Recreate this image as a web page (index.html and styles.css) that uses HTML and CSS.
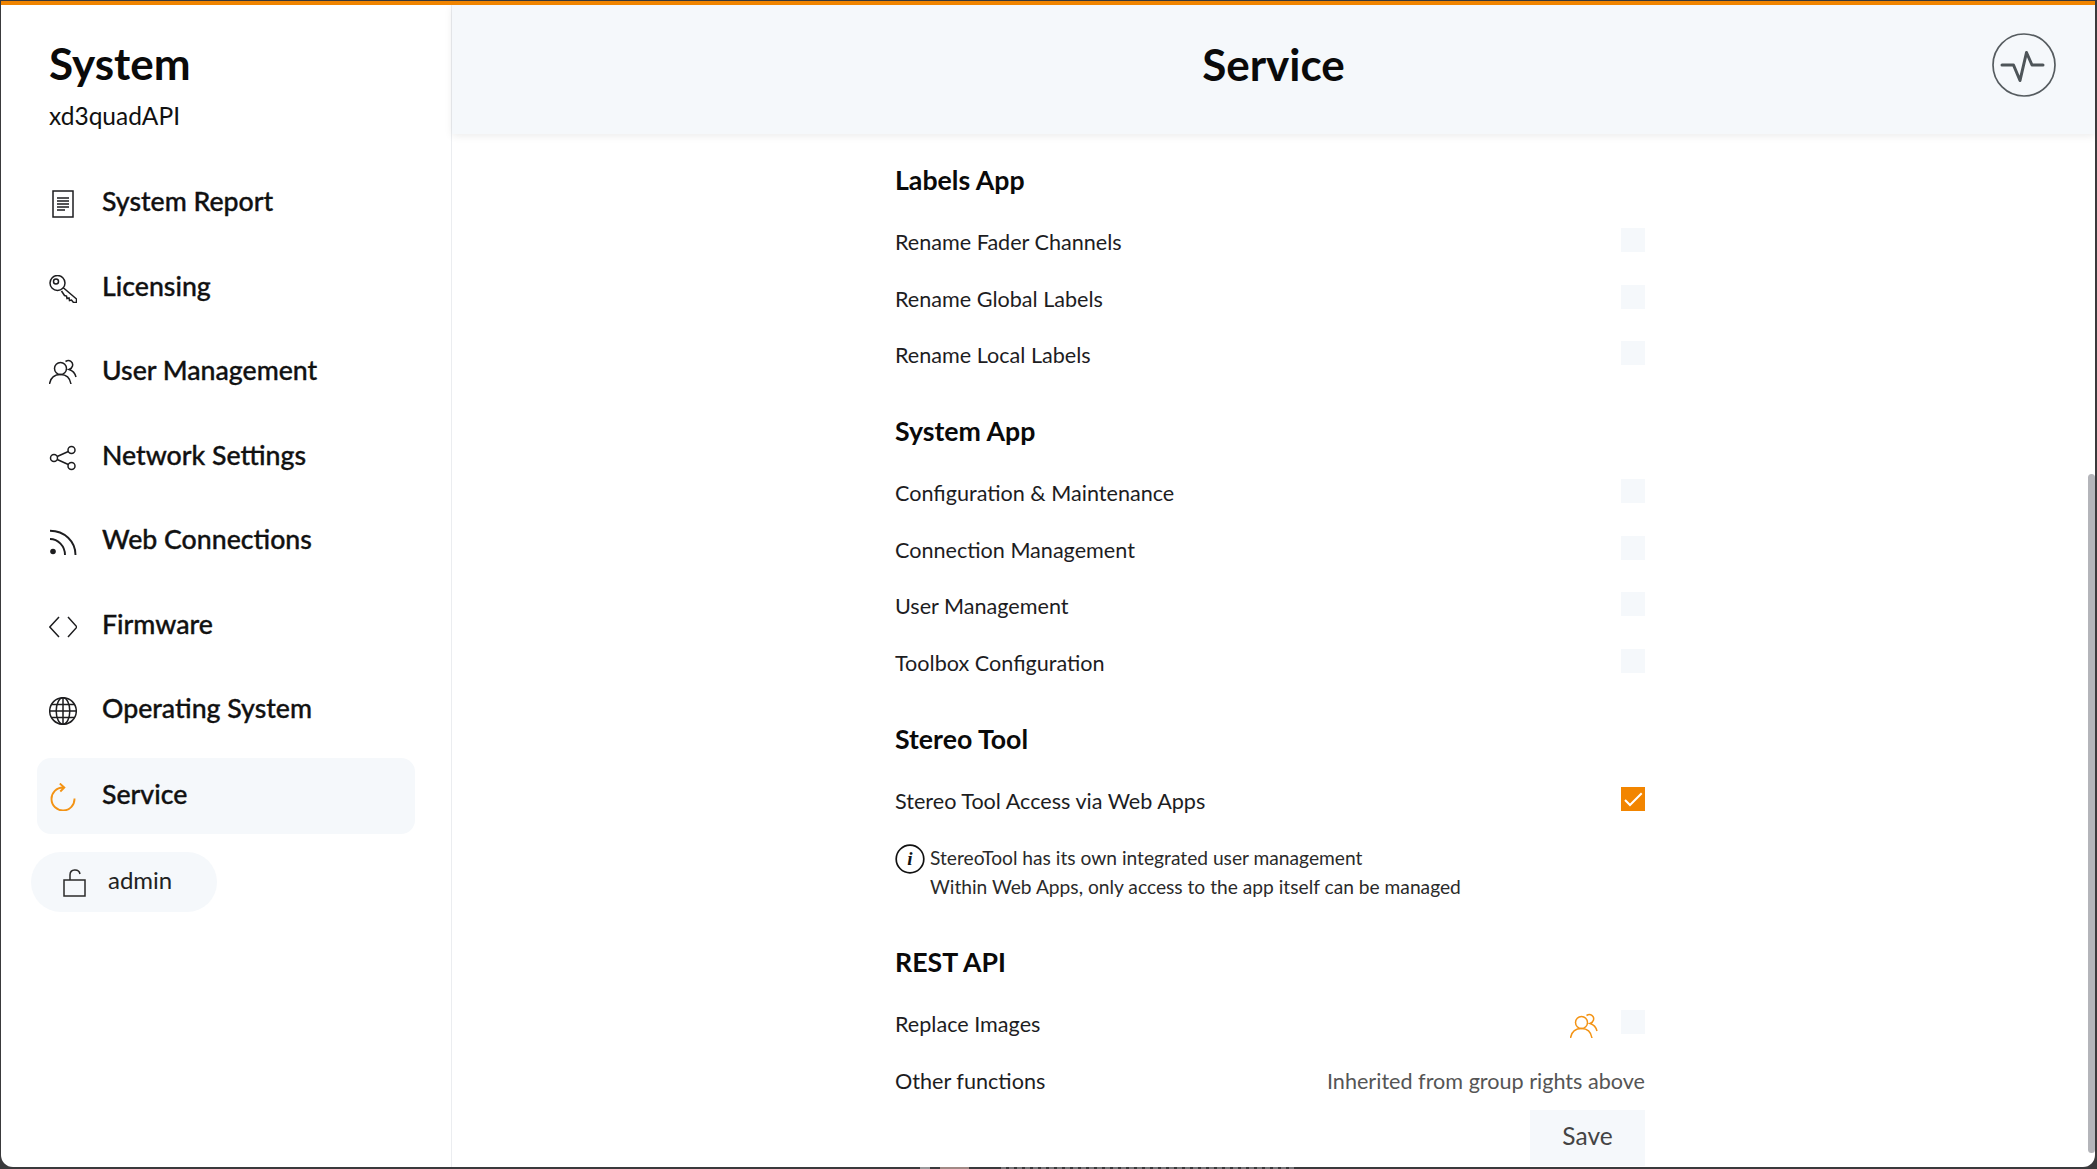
FILE: index.html
```html
<!DOCTYPE html>
<html lang="en">
<head>
<meta charset="utf-8">
<title>Service</title>
<link rel="stylesheet" href="styles.css">
</head>
<body>
<div class="window">
  <aside class="sidebar">
    <div class="brand">
      <h1 class="brand-title">System</h1>
      <div class="brand-sub">xd3quadAPI</div>
    </div>
    <nav class="nav">
      <a class="nav-item">
        <svg class="nav-icon" viewBox="0 0 28 28"><rect x="4" y="1" width="20" height="26" class="st"/><path d="M8 8h12M8 11h12M8 14h12M8 17h12M8 20h8" class="st thin"/></svg>
        <span>System Report</span>
      </a>
      <a class="nav-item">
        <svg class="nav-icon" viewBox="0 0 28 28"><circle cx="8.500" cy="8" r="7.500" class="st"/><circle cx="7" cy="6.500" r="2.500" class="st"/><path d="M14 12.500 27.500 24v3.500h-3l-2-2.500-2 .5-.5-2.500-2 .5-.5-2.500-2-.5-3-4.500" class="st"/></svg>
        <span>Licensing</span>
      </a>
      <a class="nav-item">
        <svg class="nav-icon" viewBox="0 0 28 28"><circle cx="11.500" cy="9.500" r="6" class="st"/><path d="M0.500 25c1-6 5-9.500 11-9.500s9.500 3.500 10.500 9.500M16.500 2.500c4-2.500 8 .5 7 4.500-.5 2-2 3-3.500 3.500 3.500 1 6 3.500 7 7.500" class="st"/></svg>
        <span>User Management</span>
      </a>
      <a class="nav-item">
        <svg class="nav-icon" viewBox="0 0 28 28"><circle cx="5" cy="14" r="3.500" class="st"/><circle cx="22.500" cy="6" r="3.500" class="st"/><circle cx="22.500" cy="22" r="3.500" class="st"/><path d="M8.200 12.500 19.300 7.500M8.200 15.500l11.100 5" class="st"/></svg>
        <span>Network Settings</span>
      </a>
      <a class="nav-item">
        <svg class="nav-icon" viewBox="0 0 28 28"><circle cx="4" cy="23.500" r="2.800" class="fillc"/><path d="M1 11c8 0 15 7 15 16M1 2.700c14.500 0 25.500 10.800 25.500 24.300" class="st wide"/></svg>
        <span>Web Connections</span>
      </a>
      <a class="nav-item">
        <svg class="nav-icon" viewBox="0 0 28 28"><path d="M10 4 .8 14 10 24M19 4l9 10-9 10" class="st"/></svg>
        <span>Firmware</span>
      </a>
      <a class="nav-item">
        <svg class="nav-icon" viewBox="0 0 28 28"><circle cx="14" cy="14" r="13.300" class="st"/><ellipse cx="14" cy="14" rx="6.800" ry="13.300" class="st"/><path d="M14 .7v26.600M2.500 7.500h23M.7 14h26.600M2.500 20.500h23" class="st"/></svg>
        <span>Operating System</span>
      </a>
      <a class="nav-item active">
        <svg class="nav-icon orange" viewBox="0 0 28 28"><path d="M25.500 15.500A11.500 11.500 0 1 1 14 4.500M10.800 .5l4.500 4-4 4" class="st wide"/></svg>
        <span>Service</span>
      </a>
    </nav>
    <button class="user-pill">
      <svg class="lock" viewBox="0 0 24 28"><rect x="1" y="11" width="21" height="16" class="st"/><path d="M7 11V6c0-6.500 9-6.500 10-1" class="st"/></svg>
      <span>admin</span>
    </button>
  </aside>
  <main class="main">
    <header class="header">
      <h2 class="page-title">Service</h2>
      <svg class="pulse" viewBox="0 0 64 64"><circle cx="32" cy="32" r="31" class="ring"/><path d="M10 32h11.500l6.500 15.500L34.500 19.500 40 32h11" class="beat"/></svg>
    </header>
    <div class="scroller">
      <div class="form">
        <h3 class="section first">Labels App</h3>
        <div class="row"><span>Rename Fader Channels</span><i class="check"></i></div>
        <div class="row"><span>Rename Global Labels</span><i class="check"></i></div>
        <div class="row"><span>Rename Local Labels</span><i class="check"></i></div>
        <h3 class="section">System App</h3>
        <div class="row"><span>Configuration &amp; Maintenance</span><i class="check"></i></div>
        <div class="row"><span>Connection Management</span><i class="check"></i></div>
        <div class="row"><span>User Management</span><i class="check"></i></div>
        <div class="row"><span>Toolbox Configuration</span><i class="check"></i></div>
        <h3 class="section">Stereo Tool</h3>
        <div class="row"><span>Stereo Tool Access via Web Apps</span>
          <i class="check on"><svg viewBox="0 0 24 24"><path d="M4 13 9 18 20.700 6.300"/></svg></i></div>
        <div class="note">
          <svg class="info" viewBox="0 0 30 30"><circle cx="15" cy="15" r="13.800"/></svg>
          <em class="info-i">i</em>
          <p>StereoTool has its own integrated user management<br>Within Web Apps, only access to the app itself can be managed</p>
        </div>
        <h3 class="section rest">REST API</h3>
        <div class="row"><span>Replace Images</span>
          <span class="row-end">
            <svg class="nav-icon orange small" viewBox="0 0 28 28"><circle cx="11.500" cy="9.500" r="6" class="st"/><path d="M0.500 25c1-6 5-9.500 11-9.500s9.500 3.500 10.500 9.500M16.500 2.500c4-2.500 8 .5 7 4.500-.5 2-2 3-3.500 3.500 3.500 1 6 3.500 7 7.500" class="st"/></svg>
            <i class="check"></i>
          </span></div>
        <div class="row"><span>Other functions</span><span class="muted">Inherited from group rights above</span></div>
        <div class="actions"><button class="save">Save</button></div>
      </div>
    </div>
    <div class="scrollbar"></div>
  </main>
</div>
<div class="peek peek-gray"></div>
<div class="peek peek-photo"></div>
<div class="peek peek-text"></div>
</body>
</html>
```

FILE: styles.css
```css
* { box-sizing: border-box; }
html, body { margin: 0; height: 100%; overflow: hidden; }
body {
  background: #3a3a3c;
  font-family: Lato, "Liberation Sans", sans-serif;
  color: #111;
  padding: 1px 2px 2px 1px;
  position: relative;
}
.window {
  height: 1166px;
  display: flex;
  background: #fff;
  border-top: 4px solid #f08400;
  border-radius: 0 0 12px 12px;
  overflow: hidden;
}
.sidebar {
  width: 451px;
  flex: none;
  border-right: 1px solid #ebedf0;
  padding: 0 36px 0 30px;
}
.brand { padding: 33px 0 0 18px; }
.brand-title { margin: 0; font-size: 44px; line-height: 50px; font-weight: 700; color: #0a0a0a; }
.brand-sub { margin-top: 13px; font-size: 24.500px; line-height: 30px; color: #111; }
.nav { margin-top: 30px; margin-left: 6px; display: flex; flex-direction: column; }
.nav-item {
  height: 84.500px;
  display: flex;
  align-items: center;
  gap: 25px;
  padding-left: 12px;
  font-size: 26.700px;
  font-weight: 500;
  color: #111;
  -webkit-text-stroke: .35px #111;
}
.nav-item span { position: relative; top: -2px; }
.nav-item .nav-icon { position: relative; top: 1px; }
.nav-item.active { height: 76px; margin-top: 5px; background: #f5f8fb; border-radius: 14px; }
.nav-icon { width: 28px; height: 28px; flex: none; color: #1d1d1f; }
.nav-icon.orange { color: #f39314; }
.st { fill: none; stroke: currentColor; stroke-width: 1.500; }
.st.thin { stroke-width: 1.300; }
.st.wide { stroke-width: 1.900; }
.fillc { fill: currentColor; }
.user-pill {
  margin-top: 18px;
  height: 60px;
  width: 186px;
  border: 0;
  border-radius: 30px;
  background: #f5f8fb;
  display: flex;
  align-items: center;
  gap: 21px;
  padding: 0 0 0 32px;
  font: 400 24px Lato, sans-serif;
  color: #222;
}
.user-pill span { position: relative; top: -2px; }
.lock { width: 24px; height: 28px; color: #2a2a2a; position: relative; top: 1px; }
.main { flex: 1; min-width: 0; display: flex; flex-direction: column; position: relative; }
.header {
  height: 129px;
  flex: none;
  background: #f5f8fb;
  box-shadow: 0 2px 8px rgba(0, 0, 0, .08);
  position: relative;
  display: flex;
  align-items: center;
  justify-content: center;
  z-index: 1;
}
.page-title { margin: 0; font-size: 44px; font-weight: 700; color: #0a0a0a; position: relative; top: -6px; }
.pulse { position: absolute; right: 39px; top: 28px; width: 64px; height: 64px; }
.ring { fill: none; stroke: #565c60; stroke-width: 1.700; }
.beat { fill: none; stroke: #4e5559; stroke-width: 3; stroke-linejoin: round; stroke-linecap: round; }
.scroller { flex: 1; overflow: hidden; padding-right: 7px; }
.form { width: 750px; margin: 0 auto; }
.section { margin: 0; font-size: 26.700px; line-height: 30px; font-weight: 700; color: #0a0a0a; padding-top: 32.500px; padding-bottom: 19px; }
.section.first { padding-top: 31px; padding-bottom: 19px; }
.row { height: 56.500px; display: flex; align-items: center; justify-content: space-between; font-size: 21.600px; color: #1d1d1f; }
.check { width: 24px; height: 24px; background: #f5f8fb; flex: none; display: block; margin-top: -4px; }
.check.on { background: #f28500; margin-top: -3px; }
.check svg { display: block; width: 24px; height: 24px; fill: none; stroke: #fff; stroke-width: 2; }
.row-end { display: flex; align-items: center; gap: 23px; }
.small { margin-top: 5px; }
.muted { color: #555; }
.note { position: relative; padding-left: 35px; margin-top: 14px; }
.note p { margin: 0; font-size: 19.200px; line-height: 29px; color: #2a2a2a; }
.info { position: absolute; left: 0; top: 1px; width: 30px; height: 30px; fill: none; stroke: #111; stroke-width: 1.700; }
.info-i { position: absolute; left: 0; top: 1px; width: 30px; line-height: 30px; text-align: center; font: italic 700 19px/30px "Liberation Serif", serif; color: #111; }
.section.rest { padding-top: 46px; padding-bottom: 19px; }
.actions { display: flex; justify-content: flex-end; margin-top: 1px; }
.save { width: 115px; height: 56px; border: 0; padding: 0 0 5px; background: #f5f8fb; font: 400 24.500px Lato, sans-serif; color: #444; }
.scrollbar { position: absolute; right: 0; top: 469px; width: 7px; height: 679px; background: #b4b5ba; border-radius: 4px; }
.peek { position: absolute; bottom: 0; height: 2px; }
.peek-gray { left: 920px; width: 10px; background: #9a9a9c; }
.peek-photo { left: 940px; width: 29px; background: #a08a86; }
.peek-text { left: 1001px; width: 296px; background: repeating-linear-gradient(90deg, #77777a 0 5px, #3a3a3c 5px 8px); }
```
